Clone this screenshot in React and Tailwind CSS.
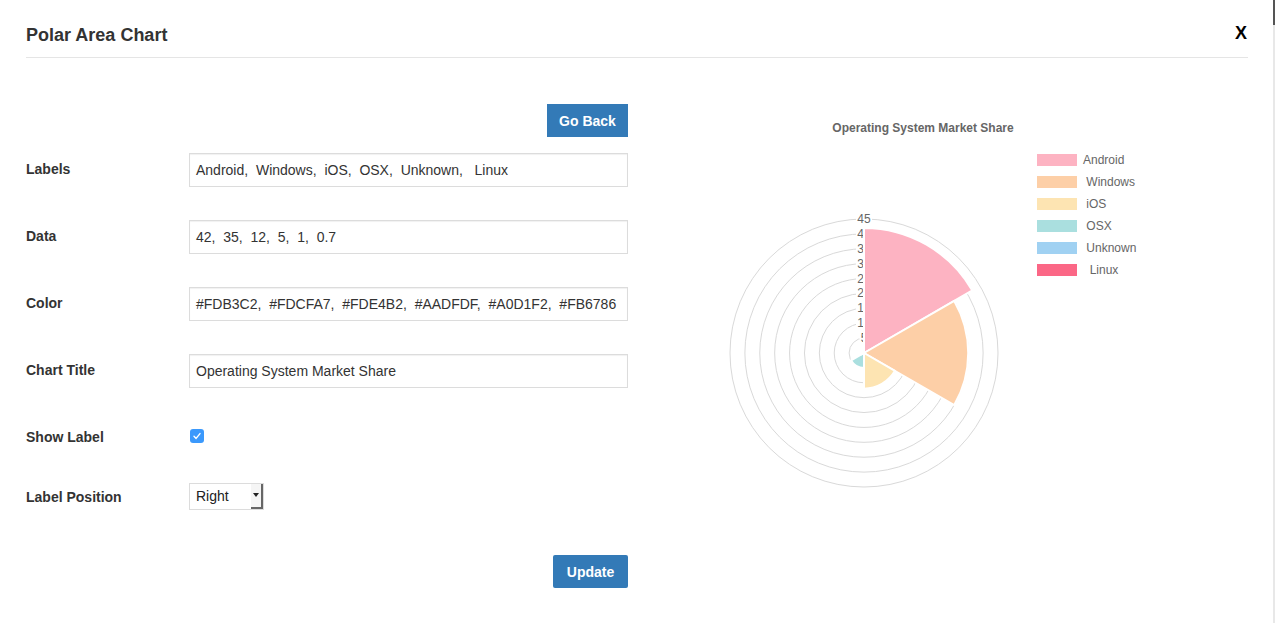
import React from 'react';

const FONT = { fontFamily: '"Liberation Sans", Arial, sans-serif' };

const COLORS = ['#FDB3C2', '#FDCFA7', '#FDE4B2', '#AADFDF', '#A0D1F2', '#FB6786'];
const DATA = [42, 35, 12, 5, 1, 0.7];
const LEGEND = ['Android', ' Windows', ' iOS', ' OSX', ' Unknown', '  Linux'];

const CX = 164;
const CY = 148;
const R = 134;
const MAX = 45;

const pt = (r, deg) => {
  const a = (deg * Math.PI) / 180;
  return [CX + r * Math.sin(a), CY - r * Math.cos(a)];
};

const wedge = (r, a0, a1) => {
  const [x0, y0] = pt(r, a0);
  const [x1, y1] = pt(r, a1);
  return `M${CX},${CY} L${x0},${y0} A${r},${r} 0 0 1 ${x1},${y1} Z`;
};

const PolarChart = () => {
  const ticks = [5, 10, 15, 20, 25, 30, 35, 40, 45];
  return (
    <svg width="330" height="290" viewBox="0 0 330 290">
      {ticks.map((t) => (
        <circle key={t} cx={CX} cy={CY} r={(R * t) / MAX} fill="none" stroke="#d9d9d9" strokeWidth="1" />
      ))}
      {ticks.map((t) => {
        const y = CY - (R * t) / MAX;
        const w = t >= 10 ? 16 : 9;
        return (
          <g key={'l' + t}>
            <rect x={CX - w / 2} y={y - 7} width={w} height={13} fill="#fff" />
            <text x={CX} y={y + 4} textAnchor="middle" fontSize="12" fill="#666" style={FONT}>
              {t}
            </text>
          </g>
        );
      })}
      {DATA.map((v, i) => (
        <path
          key={i}
          d={wedge((R * v) / MAX, i * 60, (i + 1) * 60)}
          fill={COLORS[i]}
          stroke="#fff"
          strokeWidth="2"
          strokeLinejoin="round"
        />
      ))}
    </svg>
  );
};

const Field = ({ label, value }) => (
  <div className="flex items-center h-[34px] mt-[33px] first:mt-0">
    <div className="w-[163px] text-sm font-bold text-[#333] -mt-[3px]">{label}</div>
    <div className="flex-1 h-[34px] border border-[#dcdcdc] shadow-[inset_0_1px_1px_rgba(0,0,0,0.06)] px-[6px] flex items-center text-sm text-[#333] whitespace-pre">
      {value}
    </div>
  </div>
);

const App = () => {
  return (
    <div className="min-h-screen bg-white flex" style={FONT}>
      <div className="flex-1 pl-[26px] pr-[25px]">
        <div className="h-[58px] border-b border-[#e5e5e5] flex items-start justify-between pt-[24px]">
          <h1 className="text-lg leading-[22px] font-bold text-[#333]">Polar Area Chart</h1>
          <span className="text-lg leading-[22px] font-bold text-black -mt-[2px] mr-[1px]">X</span>
        </div>

        <div className="flex">
          <div className="w-[602px]">
            <div className="flex justify-end mt-[46px]">
              <button className="h-[33px] w-[81px] bg-[#337ab7] text-white text-sm font-bold">Go Back</button>
            </div>

            <div className="mt-[16px]">
              <Field label="Labels" value="Android,  Windows,  iOS,  OSX,  Unknown,   Linux" />
              <Field label="Data" value="42,  35,  12,  5,  1,  0.7" />
              <Field label="Color" value="#FDB3C2,  #FDCFA7,  #FDE4B2,  #AADFDF,  #A0D1F2,  #FB6786" />
              <Field label="Chart Title" value="Operating System Market Share" />
            </div>

            <div className="flex items-center h-[34px] mt-[32px]">
              <div className="w-[163px] text-sm font-bold text-[#333]">Show Label</div>
              <div className="w-[14px] h-[14px] rounded-[3px] bg-[#3b99fc] flex items-center justify-center ml-[1px] -mt-[2px]">
                <svg width="10" height="10" viewBox="0 0 10 10">
                  <path d="M2 5.3 L4.1 7.4 L8 2.6" fill="none" stroke="#fff" strokeWidth="1.4" strokeLinecap="round" strokeLinejoin="round" />
                </svg>
              </div>
            </div>

            <div className="flex items-center h-[34px] mt-[25px]">
              <div className="w-[163px] text-sm font-bold text-[#333] mt-[2px]">Label Position</div>
              <div className="w-[75px] h-[27px] border border-[#dcdcdc] flex items-stretch">
                <div className="flex-1 flex items-center pl-[6px] text-sm text-[#222]">Right</div>
                <div className="w-[12px] flex items-center justify-center border-r-2 border-b-2 border-[#666] bg-[#f5f5f5]">
                  <svg width="6" height="4" viewBox="0 0 6 4">
                    <path d="M0 0 L6 0 L3 4 Z" fill="#222" />
                  </svg>
                </div>
              </div>
            </div>

            <div className="flex justify-end mt-[42px]">
              <button className="h-[33px] w-[75px] bg-[#337ab7] text-white text-sm font-bold rounded-[2px]">Update</button>
            </div>
          </div>

          <div className="ml-[72px] w-[446px]">
            <div className="mt-[63px] h-[14px] text-center text-xs leading-[14px] font-bold text-[#666]">
              Operating System Market Share
            </div>
            <div className="flex items-start">
              <div className="mt-[70px]">
                <PolarChart />
              </div>
              <div className="ml-[7px] mt-[14px] flex flex-col">
                {LEGEND.map((l, i) => (
                  <div key={i} className="flex items-center h-[22px]">
                    <div className="w-[40px] h-[12px]" style={{ backgroundColor: COLORS[i] }} />
                    <span className="ml-[6px] text-xs text-[#666] whitespace-pre">{l}</span>
                  </div>
                ))}
              </div>
            </div>
          </div>
        </div>
      </div>
      <div className="w-[2px] flex flex-col">
        <div className="h-[25px] bg-[#555]" />
        <div className="flex-1 bg-[#e8e8e8]" />
      </div>
    </div>
  );
};

export default App;
